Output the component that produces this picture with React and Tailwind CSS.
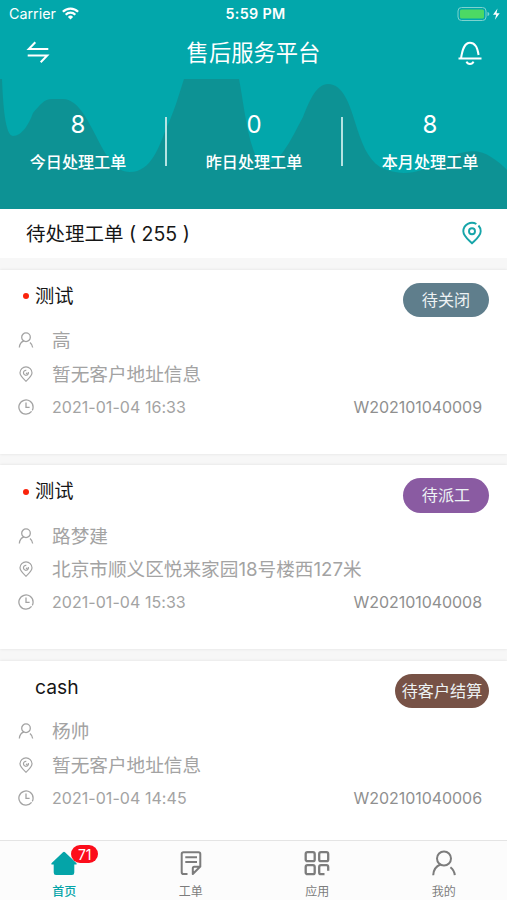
import React from 'react';

const stats = [
  { label: '今日处理工单', value: 8, box: 'w-[156px]' },
  { label: '昨日处理工单', value: 0, box: 'w-[174px]' },
  { label: '本月处理工单', value: 8, box: 'w-[174px]' },
];

const orders = [
  { no: 'W202101040009', title: '测试', unread: true, name: '高', address: '暂无客户地址信息', time: '2021-01-04 16:33', status: '待关闭', badge: 'w-[86px] bg-[#5f7e8c]' },
  { no: 'W202101040008', title: '测试', unread: true, name: '路梦建', address: '北京市顺义区悦来家园18号楼西127米', time: '2021-01-04 15:33', status: '待派工', badge: 'w-[86px] bg-[#8a5ba2]' },
  { no: 'W202101040006', title: 'cash', unread: false, name: '杨帅', address: '暂无客户地址信息', time: '2021-01-04 14:45', status: '待客户结算', badge: 'w-[94px] bg-[#775246]' },
];

function UserIcon({ className, strokeWidth = 2 }) {
  return (
    <svg viewBox="0 0 24 26" className={className} fill="none" stroke="currentColor" strokeWidth={strokeWidth}>
      <circle cx="12" cy="8.5" r="7" />
      <path d="M8.5 14.5C4.5 16 1.5 20 1.2 25.2M18.4 17.2c2.6 2 4.1 4.6 4.4 8" />
    </svg>
  );
}

function PinIcon({ className }) {
  return (
    <svg viewBox="0 0 14 16" className={className} fill="none" stroke="currentColor" strokeWidth="1.2">
      <path d="M7 15.2C4 12.4 1 10 1 6.8a6 6 0 0 1 12 0C13 10 10 12.4 7 15.2z" />
      <path d="M9.4 6.2A2.5 2.5 0 1 1 7.3 4.3M7 7.9l1.3-1.2" />
    </svg>
  );
}

function ClockIcon({ className }) {
  return (
    <svg viewBox="0 0 16 16" className={className} fill="none" stroke="currentColor" strokeWidth="1.3">
      <path d="M13.6 12.4A7.1 7.1 0 1 1 15.1 8c0 1.4-.3 2.5-.8 3.4M8 3.5V8.300h3.600" />
    </svg>
  );
}

function StatusBar() {
  return (
    <div className="flex h-[27px] items-center justify-between pl-[9px] pr-[6px]">
      <div className="flex w-[130px] items-center gap-[6px]">
        <span className="text-[14.3px] leading-[20px]">Carrier</span>
        <svg viewBox="0 0 17 13" className="h-[13px] w-[17px]" fill="none" stroke="white" strokeWidth="2.3">
          <path d="M.9 4.7a10.7 10.7 0 0 1 15.2 0M3.7 7.7a6.8 6.8 0 0 1 9.6 0" />
          <path d="M8.5 12.5L5.9 9.9a3.7 3.7 0 0 1 5.2 0z" fill="white" stroke="none" />
        </svg>
      </div>
      <span className="ml-[1px] text-[14.3px] font-semibold leading-[20px] tracking-[0.35px]">5:59 PM</span>
      <div className="flex w-[130px] items-center justify-end">
        <svg viewBox="0 0 44 16" className="h-[16px] w-[44px]">
          <rect x="1" y="1.5" width="28" height="13" rx="3.5" fill="none" stroke="#7dd3cf" />
          <rect x="3" y="3.5" width="24" height="9" rx="1.5" fill="#4cd964" />
          <path d="M30.5 6v4c1.2-.4 1.8-1 1.8-2s-.6-1.6-1.8-2z" fill="#7dd3cf" />
          <path d="M40.5 2.5L36 8.7h3.2l-1.3 5 4.8-6.4h-3.2z" fill="white" />
        </svg>
      </div>
    </div>
  );
}

function Header() {
  return (
    <header className="relative h-[209px] shrink-0 bg-[#02a7ab] text-white">
      <svg viewBox="0 0 507 130" className="absolute left-0 top-[79px] h-[130px] w-[507px]" fill="#0d9294">
        <path d="M0 0H2C3 24 5 57 13 57C22 57 29 45 33 34C40 26 44 20 52 20H63C78 20 88 42 96 57C106 77 115 93 130 93C151 93 159 68 166 50C175 31 180 12 184 0H239C243 20 246 50 253 70C259 89 272 88 283 73C291 62 297 49 303 38C310 20 317 5 328 5C343 5 350 26 355 43C362 65 367 79 380 88C402 99 420 93 439 84C455 73 477 67 491 78C498 82 503 87 507 91V130H0Z" />
      </svg>
      <div className="relative">
        <StatusBar />
        <div className="flex h-[52px] items-center justify-between pl-[26px] pr-[24px]">
          <svg viewBox="0 0 24 24" className="mb-[2px] h-[24px] w-[24px]" fill="none" stroke="white" strokeWidth="2">
            <path d="M22.3 9H2.8L9.3 2.3M1.7 15.5h19.5l-6.5 6.7" />
          </svg>
          <h1 className="text-[22.3px] leading-[30px]">售后服务平台</h1>
          <svg viewBox="0 0 26 26" className="h-[26px] w-[26px]" fill="none" stroke="white" strokeWidth="2">
            <path d="M1.5 18.5h23M4 18.5C5.4 9.5 7.3 2.8 13 2.8c4.7 0 7.5 4.8 8.6 12.2M9.5 21.7c1.2 3.2 5.8 3.2 7 0" />
          </svg>
        </div>
        <div className="flex">
          {stats.map((s, i) => (
            <React.Fragment key={s.label}>
              {i > 0 && <div className={`mt-[38px] h-[49px] w-[2px] shrink-0 bg-[#b5e3e2] ${i === 1 ? 'ml-[9px]' : ''}`} />}
              <div className={`flex shrink-0 flex-col items-center pt-[31px] ${s.box}`}>
                <div className="text-[24px] leading-[30px]">{s.value}</div>
                <div className="mt-[11px] whitespace-nowrap text-[16.1px] font-medium leading-[22px]">{s.label}</div>
              </div>
            </React.Fragment>
          ))}
        </div>
      </div>
    </header>
  );
}

function OrderCard({ order }) {
  return (
    <div className="mb-[11.5px] h-[184px] bg-white pl-[18px] pr-[18px] pt-[13px] shadow-[0_0_3px_rgba(0,0,0,0.1)]">
      <div className="flex h-[36px] justify-between">
        <div className="flex h-[27px] items-center">
          <span className={`ml-[5px] mr-[6px] h-[6px] w-[6px] rounded-full ${order.unread ? 'bg-[#fa230c]' : ''}`} />
          <span className="text-[19.3px] leading-[27px] text-[#161616]">{order.title}</span>
        </div>
        <div className={`flex h-[34.5px] items-center justify-center rounded-full text-[16.1px] text-[#edf2f4] ${order.badge}`}>{order.status}</div>
      </div>
      <div className="mt-[5px] flex h-[33px] items-center">
        <UserIcon className="h-[16px] w-[16px]" strokeWidth={2.1} />
        <span className="ml-[18px] text-[18.65px] leading-[28px]">{order.name}</span>
      </div>
      <div className="flex h-[34px] items-center">
        <PinIcon className="ml-[1px] h-[16px] w-[14px]" />
        <span className="ml-[19px] text-[18.65px] leading-[28px]">{order.address}</span>
      </div>
      <div className="flex h-[32px] items-center">
        <ClockIcon className="h-[16px] w-[16px]" />
        <span className="ml-[18px] text-[16px] leading-[24px] tracking-[0.05px]">{order.time}</span>
        <span className="ml-auto mr-[7px] text-[16px] leading-[24px] tracking-[-0.05px] text-[#8f8f8f]">{order.no}</span>
      </div>
    </div>
  );
}

function TabBar() {
  return (
    <nav className="grid h-[60px] shrink-0 grid-cols-4 border-t border-[#e4e4e4] bg-[#fcfcfc] pl-[1px] text-[12px] text-[#7c7c7c]">
      <div className="flex flex-col items-center pt-[9px] text-[#04a4a8]">
        <div className="relative">
          <svg viewBox="0 0 26 26" className="h-[26px] w-[26px]" fill="currentColor">
            <path d="M12 2.2Q13 1.2 14 2.2L25.3 13q1 1.3-.5 1.6H23.3V22.5Q23.3 25 21 25H5Q2.7 25 2.7 22.5V14.6H1.2Q-.3 14.3.7 13Z" />
          </svg>
          <span className="absolute -top-[5px] left-[20px] flex h-[18px] w-[27px] items-center justify-center rounded-full bg-[#fc0d1b] text-[14px] text-white">71</span>
        </div>
        <span className="mt-[7px] font-medium leading-[18px]">首页</span>
      </div>
      <div className="flex flex-col items-center pt-[9px]">
        <svg viewBox="0 0 26 26" className="h-[26px] w-[26px]" fill="none" stroke="currentColor" strokeWidth="2" strokeLinejoin="round">
          <path d="M9.5 24H5.5Q3.7 24 3.7 22.2V4Q3.7 2.2 5.5 2.2H20.5Q22.3 2.2 22.3 4V16.5L14.8 24V18.3Q14.8 16.8 16.3 16.8H22.3M7.3 7.3H19M7.3 12H19" />
        </svg>
        <span className="mt-[7px] leading-[18px]">工单</span>
      </div>
      <div className="flex flex-col items-center pt-[9px]">
        <svg viewBox="0 0 26 26" className="h-[26px] w-[26px]" fill="none" stroke="currentColor" strokeWidth="2.3">
          <rect x="1.7" y="2.2" width="9" height="9" rx="1.8" />
          <rect x="15.2" y="2.2" width="9" height="9" rx="1.8" />
          <rect x="1.7" y="15.2" width="9" height="9" rx="1.8" />
          <path d="M20.5 24.2H17q-1.800 0-1.800-1.800V17q0-1.800 1.800-1.800h5.400q1.800 0 1.800 1.800v3.800" />
        </svg>
        <span className="mt-[7px] leading-[18px]">应用</span>
      </div>
      <div className="flex flex-col items-center pt-[9px]">
        <UserIcon className="h-[26px] w-[24px]" />
        <span className="mt-[7px] leading-[18px]">我的</span>
      </div>
    </nav>
  );
}

export default function App() {
  return (
    <div className="flex h-[900px] w-[507px] flex-col overflow-hidden bg-[#f7f7f7] font-['Inter','Noto_Sans_CJK_SC',sans-serif] text-[#a3a3a3]">
      <Header />

      <div className="flex h-[48.5px] shrink-0 items-center justify-between bg-white pl-[26px] pr-[25px]">
        <h2 className="mt-[1px] text-[19.5px] leading-[28px] text-[#161616]">待处理工单 ( 255 )</h2>
        <svg viewBox="0 0 20 24" className="h-[24px] w-[20px] text-[#16a5a9]" fill="none" stroke="currentColor" strokeWidth="1.9">
          <path d="M14.4 3A8.7 8.7 0 0 0 1.3 10.2C1.3 15 6 18.4 10 22.2C14 18.4 18.7 15 18.7 10.2Q18.7 7 16.5 4.5" />
          <circle cx="10" cy="10.3" r="3" />
        </svg>
      </div>

      {/* Pending orders */}
      <div className="min-h-0 flex-1 overflow-hidden pt-[12px]">
        {orders.map(o => <OrderCard key={o.no} order={o} />)}
      </div>

      <TabBar />
    </div>
  );
}
